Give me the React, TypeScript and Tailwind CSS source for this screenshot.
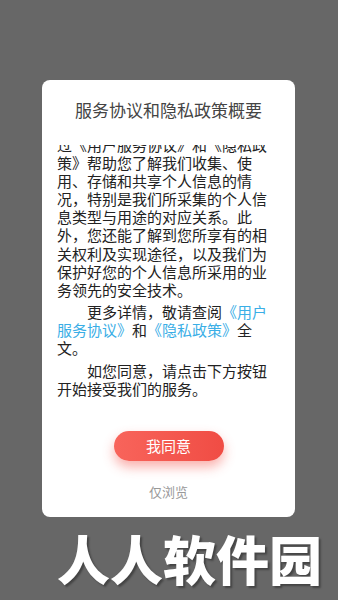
const Link = ({ children }: { children: string }) => (
  <span className="text-[#3aaee6]">{children}</span>
);

export default function App() {
  return (
    <div
      className="flex min-h-[600px] w-full flex-col bg-[#676767]"
      style={{ fontFamily: '"Noto Sans CJK SC", "Noto Sans", sans-serif' }}
    >
      <div className="mx-[42px] mt-[80px] flex w-[253px] flex-col rounded-[8px] bg-white pb-[15px] pt-[18px]">
        <h1 className="text-center text-[17px] leading-[24px] text-[#444]">
          服务协议和隐私政策概要
        </h1>

        <div className="mt-[23px] h-[270px] overflow-hidden px-[15px] text-[15px] leading-[18.1px] text-[#222]">
          <p className="-mt-[9px]">
            过《用户服务协议》和《隐私政策》帮助您了解我们收集、使用、存储和共享个人信息的情况，特别是我们所采集的个人信息类型与用途的对应关系。此外，您还能了解到您所享有的相关权利及实现途径，以及我们为保护好您的个人信息所采用的业务领先的安全技术。
          </p>
          <p className="mt-[4px] indent-[30px]">
            更多详情，敬请查阅<Link>《用户服务协议》</Link>和<Link>《隐私政策》</Link>全文。
          </p>
          <p className="mt-[5px] indent-[30px]">
            如您同意，请点击下方按钮开始接受我们的服务。
          </p>
        </div>

        <button className="mx-auto mt-[16px] h-[30px] w-[110px] rounded-full bg-gradient-to-r from-[#f8645b] to-[#f04c44] text-[15px] text-white shadow-[0_6px_12px_rgba(244,80,70,0.45)]">
          我同意
        </button>
        <p className="mt-[21px] text-center text-[13px] leading-[20px] text-[#999]">
          仅浏览
        </p>
      </div>

      <div className="ml-[57px] mt-[15px] text-[53px] font-black leading-none text-white [text-shadow:2px_2px_2px_rgba(0,0,0,0.35)]">
        人人软件园
      </div>
    </div>
  );
}
